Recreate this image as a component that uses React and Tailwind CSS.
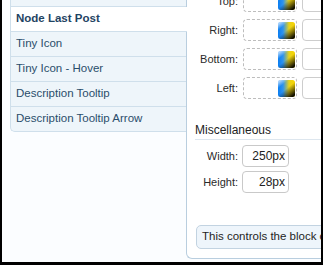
import React from 'react';

const tabs = [
  { label: 'Node Last Post Link', cut: true },
  { label: 'Node Last Post', active: true },
  { label: 'Tiny Icon' },
  { label: 'Tiny Icon - Hover' },
  { label: 'Description Tooltip' },
  { label: 'Description Tooltip Arrow', last: true },
];

const sides = ['Top', 'Right', 'Bottom', 'Left'];

function Swatch() {
  return (
    <svg width="17" height="17" viewBox="0 0 17 17" className="block">
      <defs>
        <linearGradient id="sw-h" x1="0" y1="0" x2="1" y2="0">
          <stop offset="0" stopColor="#0a7ef2" />
          <stop offset="0.3" stopColor="#2f93ee" />
          <stop offset="0.65" stopColor="#e9d21a" />
          <stop offset="1" stopColor="#f6d400" />
        </linearGradient>
        <linearGradient id="sw-v" x1="0" y1="0" x2="0.8" y2="1">
          <stop offset="0" stopColor="#ffffff" stopOpacity="0.9" />
          <stop offset="0.3" stopColor="#ffffff" stopOpacity="0" />
          <stop offset="0.55" stopColor="#000000" stopOpacity="0" />
          <stop offset="1" stopColor="#000000" stopOpacity="0.95" />
        </linearGradient>
      </defs>
      <rect x="0" y="0" width="17" height="17" rx="2.5" fill="url(#sw-h)" />
      <rect x="0" y="0" width="17" height="17" rx="2.5" fill="url(#sw-v)" />
    </svg>
  );
}

export default function App() {
  return (
    <div className="w-[323px] h-[265px] bg-black" style={{ fontFamily: '"Liberation Sans", Arial, sans-serif' }}>
      <div className="ml-[2px] w-[319px] h-[262px] bg-[#fbfdff] overflow-hidden flex">
        {/* tab list */}
        <div className="pl-[8px] w-[184px] shrink-0">
          <div className="mt-[-18px] flex flex-col">
            {tabs.map((t) => (
              <div
                key={t.label}
                className={
                  'h-[25px] box-border border-l border-b border-[#cfdfeb] pl-[5px] flex items-center text-[11.5px] whitespace-nowrap ' +
                  (t.active ? 'bg-white relative z-10 -mr-px font-bold text-[#1f4463]' : 'bg-[#eef5fa] text-[#2a4d6b]') +
                  (t.last ? ' rounded-bl-[5px]' : '')
                }
              >
                {t.label}
              </div>
            ))}
          </div>
        </div>

        {/* content panel */}
        <div className="w-[250px] shrink-0 h-[259px] bg-white border-l border-b border-[#b9cedf] rounded-bl-[6px] pl-[8px] pb-[9px]">
          <div className="mt-[-10px] flex flex-col gap-[7px]">
            {sides.map((s) => (
              <div key={s} className="flex items-center h-[22px]">
                <div className="w-[43px] text-right text-[11px] text-[#2a2a2a]">{s}:</div>
                <div className="ml-[5px] w-[54px] h-[22px] border border-dashed border-[#bdbdbd] rounded-[4px] flex items-center justify-end pr-[1px]">
                  <Swatch />
                </div>
                <div className="ml-[5px] w-[60px] h-[22px] border border-[#cdcdcd] rounded-[4px] bg-white" />
              </div>
            ))}
          </div>

          <div className="mt-[24px] text-[12px] leading-[15px] pb-[1px] text-[#222] border-b border-[#dde6ee]">
            Miscellaneous
          </div>

          <div className="mt-[5px] flex flex-col gap-[4px]">
            {[
              ['Width', '250px'],
              ['Height', '28px'],
            ].map(([l, v]) => (
              <div key={l} className="flex items-center h-[22px]">
                <div className="w-[43px] text-right text-[11px] text-[#2a2a2a]">{l}:</div>
                <div className="ml-[4px] w-[47px] h-[22px] border border-[#c9c9c9] rounded-[4px] bg-white flex items-center justify-end pr-[3px] text-[12px] text-[#222]">
                  {v}
                </div>
              </div>
            ))}
          </div>

          <div className="mt-[32px] ml-[1px] w-[300px] h-[24px] border border-[#c2d3e1] rounded-[5px] bg-[#eef5fb] flex items-center pl-[5px] text-[11.5px] text-[#1e1e1e] whitespace-nowrap">
            This controls the block containing the last post information.
          </div>
        </div>
      </div>
    </div>
  );
}
